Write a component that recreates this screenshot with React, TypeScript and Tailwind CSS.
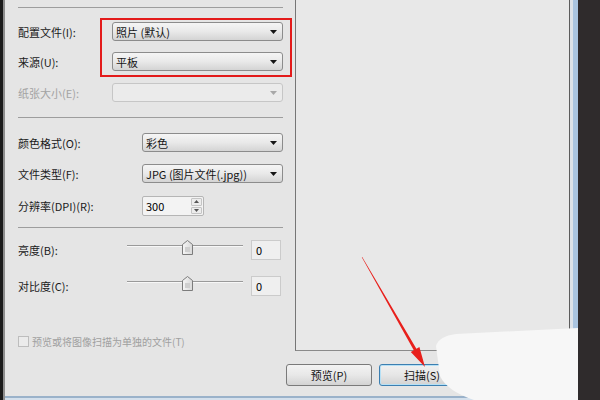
import React from 'react';
import clsx from 'clsx';

const FONT = { fontFamily: '"Noto Sans CJK SC", "Noto Sans", sans-serif' };

const DownArrow: React.FC<{ disabled?: boolean }> = ({ disabled }) => (
  <svg width="7" height="4" viewBox="0 0 7 4" className="shrink-0">
    <polygon points="0,0 7,0 3.5,4" fill={disabled ? '#a8a8a8' : '#151515'} />
  </svg>
);

const Combo: React.FC<{ text?: string; disabled?: boolean; className?: string }> = ({ text, disabled, className }) => (
  <div
    className={clsx(
      'h-[19px] flex items-center rounded-[3px] border pl-[3px] pr-[5px]',
      disabled
        ? 'border-[#c6c6c6] bg-[#ebebeb]'
        : 'border-[#8c8c8c] bg-linear-to-b from-[#f5f5f5] via-[#e9e9e9] to-[#d4d4d4]',
      className
    )}
  >
    <span className="flex-1 whitespace-nowrap leading-[14px] text-[#141414]">{text}</span>
    <DownArrow disabled={disabled} />
  </div>
);

const Label: React.FC<{ text: string; width: string; disabled?: boolean }> = ({ text, width, disabled }) => (
  <span className={clsx('shrink-0 whitespace-nowrap leading-[14px]', width, disabled ? 'text-[#a3a3a3]' : 'text-[#1a1a1a]')}>
    {text}
  </span>
);

const Separator: React.FC<{ className?: string }> = ({ className }) => (
  <div className={clsx('h-px bg-[#9d9d9d]', className)} />
);

const Thumb: React.FC = () => (
  <svg width="11" height="15" viewBox="0 0 11 15" className="absolute top-0 left-[55px]">
    <defs>
      <linearGradient id="thumbFill" x1="0" y1="0" x2="1" y2="0">
        <stop offset="0" stopColor="#f6f6f6" />
        <stop offset="1" stopColor="#d8d8d8" />
      </linearGradient>
    </defs>
    <path d="M0.5 4.5 L5.5 0.5 L10.5 4.5 L10.5 14.5 L0.5 14.5 Z" fill="url(#thumbFill)" stroke="#7c7c7c" />
    <rect x="3" y="7" width="5" height="5" fill="#cfcfcf" />
  </svg>
);

const SliderRow: React.FC<{ label: string; className?: string }> = ({ label, className }) => (
  <div className={clsx('flex items-start h-[20px]', className)}>
    <div className="w-[109px] h-[20px] flex items-center">
      <Label text={label} width="w-auto" />
    </div>
    <div className="relative w-[116px] h-[20px]">
      <div className="mt-[5px] h-px bg-[#9a9a9a]" />
      <div className="h-px bg-[#f7f7f7]" />
      <Thumb />
    </div>
    <div className="ml-[8px] w-[30px] h-[20px] flex items-center border border-[#cbcbcb] bg-[#efefef] pl-[4px] leading-[14px]">
      0
    </div>
  </div>
);

const SpinBox: React.FC = () => (
  <div className="w-[62px] h-[20px] flex border border-[#b5b5b5] bg-[#f3f3f3] rounded-[2px]">
    <div className="flex-1 flex items-center pl-[3px] leading-[14px]">300</div>
    <div className="w-[13px] flex flex-col gap-px p-px">
      <div className="flex-1 flex items-center justify-center border border-[#c4c4c4] bg-[#ececec] rounded-[1px]">
        <svg width="5" height="3" viewBox="0 0 5 3"><polygon points="0,3 5,3 2.5,0" fill="#555" /></svg>
      </div>
      <div className="flex-1 flex items-center justify-center border border-[#c4c4c4] bg-[#ececec] rounded-[1px]">
        <svg width="5" height="3" viewBox="0 0 5 3"><polygon points="0,0 5,0 2.5,3" fill="#555" /></svg>
      </div>
    </div>
  </div>
);

const LeftPanel: React.FC = () => (
  <div className="w-[290px] shrink-0 flex flex-col pl-[13px] pr-[12px] pt-[7px] text-[11px]">
    <Separator />
    <div className="mt-[14px] flex items-center">
      <Label text="配置文件(I):" width="w-[94px]" />
      <Combo text="照片 (默认)" className="flex-1" />
    </div>
    <div className="mt-[11px] flex items-center">
      <Label text="来源(U):" width="w-[94px]" />
      <Combo text="平板" className="flex-1" />
    </div>
    <div className="mt-[12px] flex items-center">
      <Label text="纸张大小(E):" width="w-[94px]" disabled />
      <Combo disabled className="flex-1" />
    </div>
    <Separator className="mt-[15px]" />
    <div className="mt-[15px] flex items-center">
      <Label text="颜色格式(O):" width="w-[124px]" />
      <Combo text="彩色" className="flex-1" />
    </div>
    <div className="mt-[12px] flex items-center">
      <Label text="文件类型(F):" width="w-[124px]" />
      <Combo text="JPG (图片文件(.jpg))" className="flex-1" />
    </div>
    <div className="mt-[13px] flex items-center">
      <Label text="分辨率(DPI)(R):" width="w-[124px]" />
      <SpinBox />
    </div>
    <Separator className="mt-[11px]" />
    <SliderRow label="亮度(B):" className="mt-[12px]" />
    <SliderRow label="对比度(C):" className="mt-[16px]" />
    <div className="mt-[39px] flex items-center gap-[3px]">
      <div className="w-[11px] h-[11px] border border-[#bdbdbd] bg-[#ebebeb]" />
      <span className="text-[10px] leading-[13px] whitespace-nowrap text-[#a0a0a0]">预览或将图像扫描为单独的文件(T)</span>
    </div>
  </div>
);

const Overlay: React.FC = () => (
  <svg className="absolute inset-0 pointer-events-none" width="600" height="400" viewBox="0 0 600 400">
    <path d="M436 346 Q439 336 456 334 L578 328 L578 400 L474 400 Q447 391 440 376 Z" fill="#f7f7f7" />
    <polygon points="362.2,257.1 361.8,257.3 413.8,350.3 410.8,352.1 425,367 419.4,347.1 416.4,348.8" fill="#e8201c" />
  </svg>
);

export default function App() {
  return (
    <div className="relative w-[600px] h-[400px] flex overflow-hidden bg-[#e5e5e5]" style={FONT}>
      <div className="w-[3px] shrink-0 bg-[#1b1b1b]" />
      <div className="w-[2px] shrink-0 bg-[#8d8d8d]" />
      <div className="w-[565px] shrink-0 flex flex-col">
        <div className="h-[351px] flex">
          <LeftPanel />
          <div className="flex-1 border-l border-r border-b border-l-[#767676] border-r-[#5c5c5c] border-b-[#8a8a8a] bg-[#e8e8e8]" />
        </div>
        <div className="mt-[13px] pl-[281px] flex gap-[7px] text-[11px] text-[#141414]">
          <button className="w-[86px] h-[22px] rounded-[3px] border border-[#7a7a7a] bg-linear-to-b from-[#f3f3f3] via-[#e8e8e8] to-[#d3d3d3] leading-[14px]">
            预览(P)
          </button>
          <button className="w-[86px] h-[22px] rounded-[3px] border border-[#3c7fb1] shadow-[inset_0_0_0_1px_#b6e0f5] bg-linear-to-b from-[#f1f1f1] via-[#e6e6e6] to-[#d2d2d2] leading-[14px]">
            扫描(S)
          </button>
        </div>
        <div className="mt-[10px] h-[2px] bg-[#9ab2ca]" />
        <div className="flex-1 bg-[#d4e0ec]" />
      </div>
      <div className="w-[3px] shrink-0 bg-[#dde2e8]" />
      <div className="w-[5px] shrink-0 bg-[#aac4df]" />
      <div className="flex-1 bg-[#2f2b2c]" />
      <div className="absolute left-[100px] top-[18px] w-[192px] h-[59px] border-2 border-[#e31b1b]" />
      <Overlay />
    </div>
  );
}
